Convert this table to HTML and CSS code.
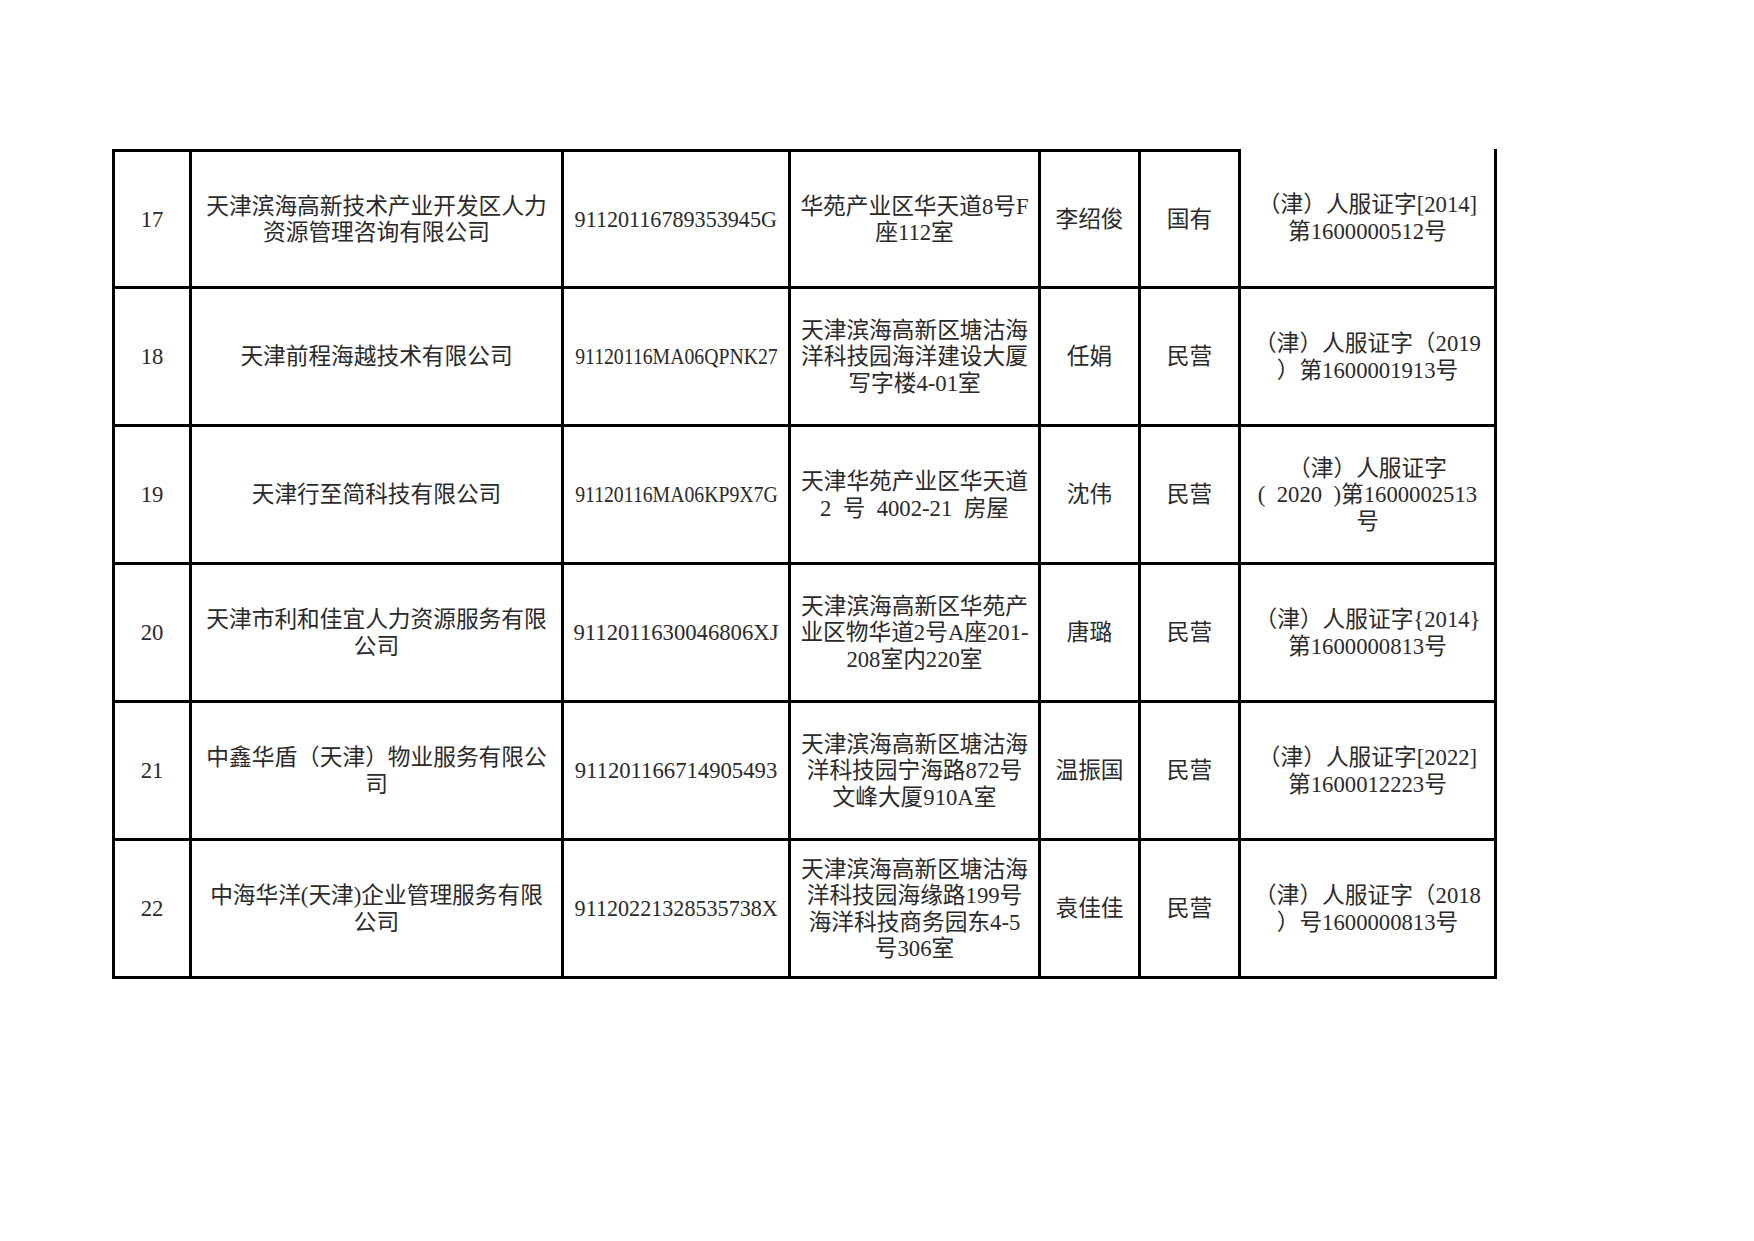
FILE: index.html
```html
<!DOCTYPE html>
<html lang="zh-CN">
<head>
<meta charset="utf-8">
<title>人力资源服务机构名单</title>
<link rel="stylesheet" href="styles.css">
</head>
<body>
<div class="page">
  <div class="sheet">
    <div class="cell top">17</div>
    <div class="cell top">天津滨海高新技术产业开发区人力<br>资源管理咨询有限公司</div>
    <div class="cell top"><span class="code sq2">91120116789353945G</span></div>
    <div class="cell top">华苑产业区华天道8号F<br>座112室</div>
    <div class="cell top">李绍俊</div>
    <div class="cell top">国有</div>
    <div class="cell">（津）人服证字[2014]<br>第1600000512号</div>

    <div class="cell">18</div>
    <div class="cell">天津前程海越技术有限公司</div>
    <div class="cell"><span class="code sq1">91120116MA06QPNK27</span></div>
    <div class="cell">天津滨海高新区塘沽海<br>洋科技园海洋建设大厦<br>写字楼4-01室</div>
    <div class="cell">任娟</div>
    <div class="cell">民营</div>
    <div class="cell">（津）人服证字（2019<br>）第1600001913号</div>

    <div class="cell">19</div>
    <div class="cell">天津行至简科技有限公司</div>
    <div class="cell"><span class="code sq1">91120116MA06KP9X7G</span></div>
    <div class="cell">天津华苑产业区华天道<br>2&ensp;号&ensp;4002-21&ensp;房屋</div>
    <div class="cell">沈伟</div>
    <div class="cell">民营</div>
    <div class="cell">（津）人服证字<br>(&ensp;2020&ensp;)第1600002513<br>号</div>

    <div class="cell">20</div>
    <div class="cell">天津市利和佳宜人力资源服务有限<br>公司</div>
    <div class="cell"><span class="code">9112011630046806XJ</span></div>
    <div class="cell">天津滨海高新区华苑产<br>业区物华道2号A座201-<br>208室内220室</div>
    <div class="cell">唐璐</div>
    <div class="cell">民营</div>
    <div class="cell">（津）人服证字{2014}<br>第1600000813号</div>

    <div class="cell">21</div>
    <div class="cell">中鑫华盾（天津）物业服务有限公<br>司</div>
    <div class="cell"><span class="code">911201166714905493</span></div>
    <div class="cell">天津滨海高新区塘沽海<br>洋科技园宁海路872号<br>文峰大厦910A室</div>
    <div class="cell">温振国</div>
    <div class="cell">民营</div>
    <div class="cell">（津）人服证字[2022]<br>第1600012223号</div>

    <div class="cell">22</div>
    <div class="cell">中海华洋(天津)企业管理服务有限<br>公司</div>
    <div class="cell"><span class="code sq2">91120221328535738X</span></div>
    <div class="cell">天津滨海高新区塘沽海<br>洋科技园海缘路199号<br>海洋科技商务园东4-5<br>号306室</div>
    <div class="cell">袁佳佳</div>
    <div class="cell">民营</div>
    <div class="cell">（津）人服证字（2018<br>）号1600000813号</div>
  </div>
</div>
</body>
</html>
```

FILE: styles.css
```css
html, body {
  margin: 0;
  padding: 0;
  background: #ffffff;
}

body {
  font-family: "Liberation Serif", "Noto Sans CJK SC", serif;
  color: #2a2a2a;
}

.page {
  padding: 149px 0 0 112px;
}

.sheet {
  display: grid;
  grid-template-columns: 77px 372px 227px 250px 100px 100px 256px;
  grid-template-rows: 140px repeat(5, 138px);
  width: max-content;
  border-left: 3px solid #000;
}

.cell {
  box-sizing: border-box;
  display: flex;
  align-items: center;
  justify-content: center;
  text-align: center;
  white-space: nowrap;
  font-size: 22.7px;
  line-height: 26.5px;
  border-right: 3px solid #000;
  border-bottom: 3px solid #000;
  padding-top: 2px;
}

.cell.top {
  border-top: 3px solid #000;
}

.code {
  display: inline-block;
}

.sq1 {
  transform: scaleX(0.87);
}

.sq2 {
  transform: scaleX(0.975);
}
```
